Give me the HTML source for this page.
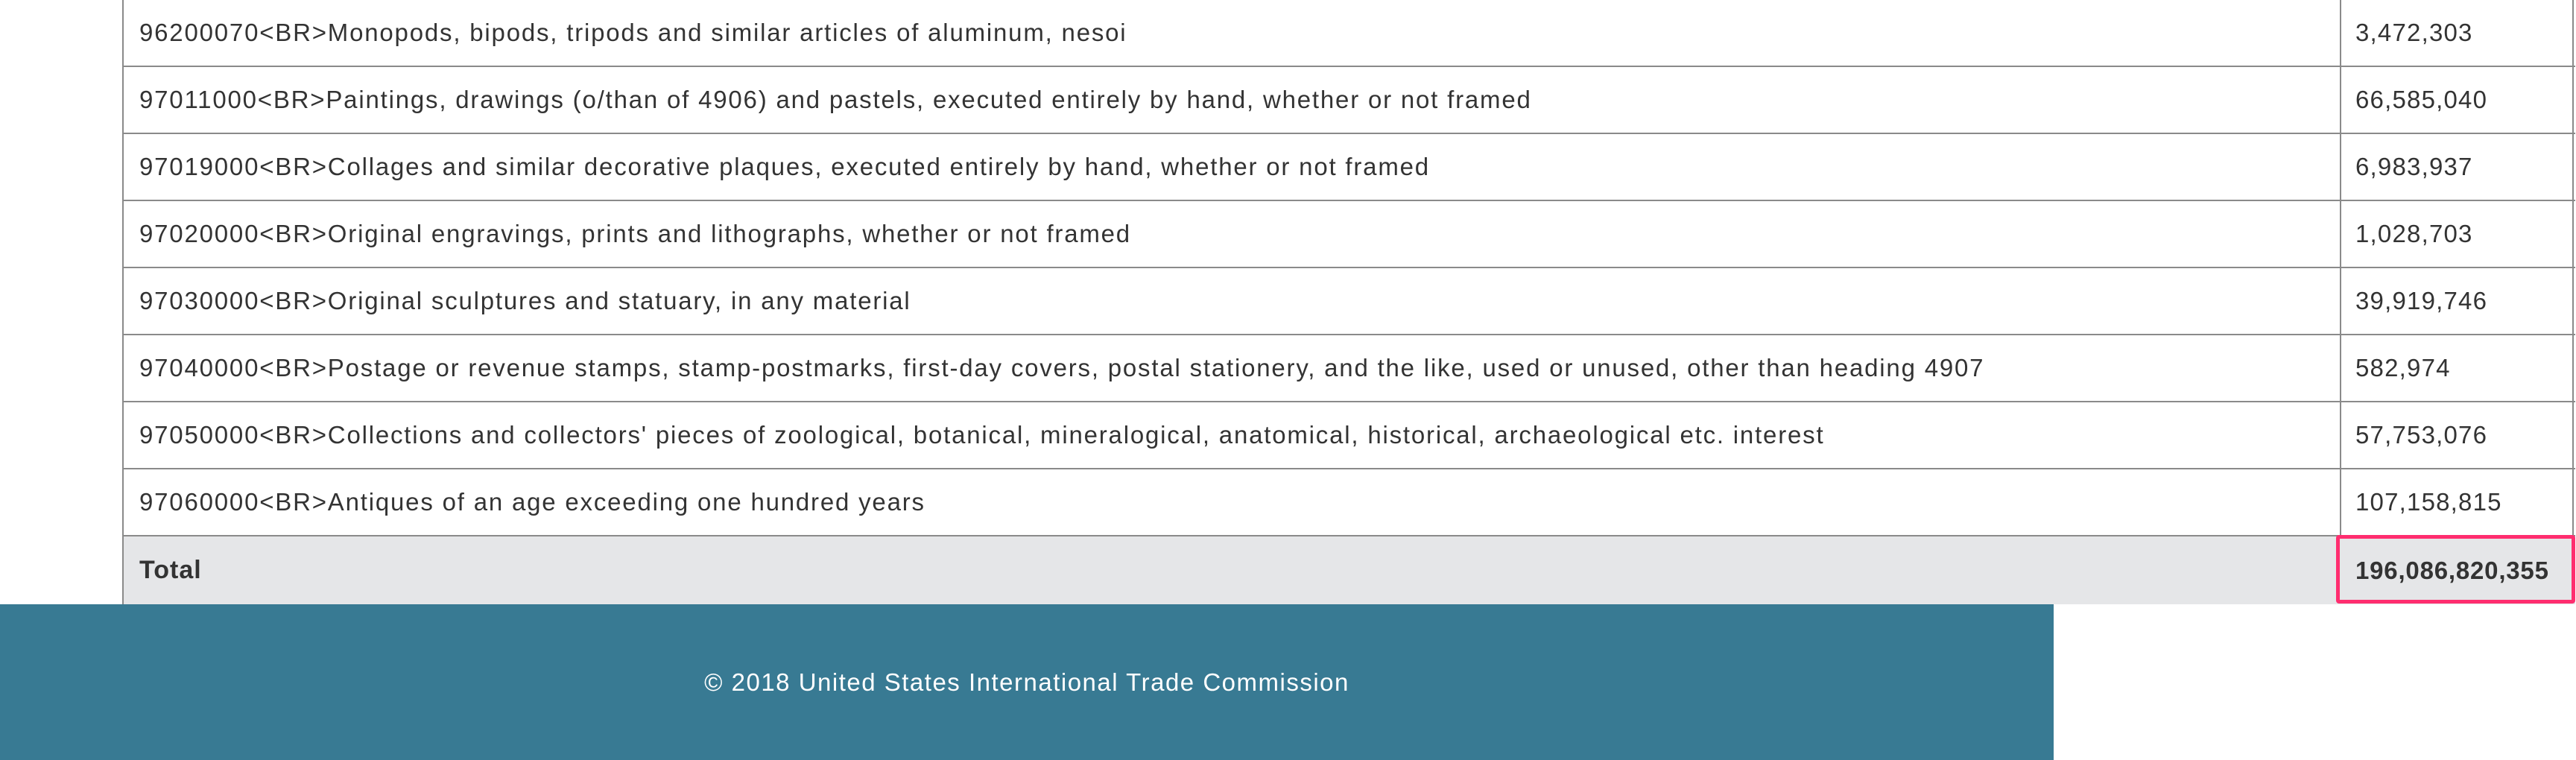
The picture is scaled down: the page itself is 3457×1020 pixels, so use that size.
<!DOCTYPE html>
<html><head><style>
html,body{margin:0;padding:0;width:3457px;height:1020px;overflow:hidden;background:#fff;font-family:"Liberation Sans",sans-serif;color:#333;}
.t{position:absolute;left:164px;top:0;width:3290px;}
.r{position:absolute;left:0;width:3290px;height:90px;border-bottom:2px solid #8a8a8a;box-sizing:border-box;}
.c{position:absolute;top:0;height:100%;display:flex;align-items:center;font-size:33px;letter-spacing:1.8px;white-space:nowrap;}
.c1{left:21px;}
.c2{left:2995px;letter-spacing:1.2px;}
.v{position:absolute;left:2974px;top:0;height:100%;border-left:2px solid #8a8a8a;}
</style></head><body>
<div class="t" style="height:811px;border-left:2px solid #8a8a8a;border-right:2px solid #8a8a8a;box-sizing:border-box;">
<div class="r" style="top:0"><div class="v"></div><div class="c c1">96200070&lt;BR&gt;Monopods, bipods, tripods and similar articles of aluminum, nesoi</div><div class="c c2">3,472,303</div></div>
<div class="r" style="top:90px"><div class="v"></div><div class="c c1">97011000&lt;BR&gt;Paintings, drawings (o/than of 4906) and pastels, executed entirely by hand, whether or not framed</div><div class="c c2">66,585,040</div></div>
<div class="r" style="top:180px"><div class="v"></div><div class="c c1">97019000&lt;BR&gt;Collages and similar decorative plaques, executed entirely by hand, whether or not framed</div><div class="c c2">6,983,937</div></div>
<div class="r" style="top:270px"><div class="v"></div><div class="c c1">97020000&lt;BR&gt;Original engravings, prints and lithographs, whether or not framed</div><div class="c c2">1,028,703</div></div>
<div class="r" style="top:360px"><div class="v"></div><div class="c c1">97030000&lt;BR&gt;Original sculptures and statuary, in any material</div><div class="c c2">39,919,746</div></div>
<div class="r" style="top:450px"><div class="v"></div><div class="c c1">97040000&lt;BR&gt;Postage or revenue stamps, stamp-postmarks, first-day covers, postal stationery, and the like, used or unused, other than heading 4907</div><div class="c c2">582,974</div></div>
<div class="r" style="top:540px"><div class="v"></div><div class="c c1">97050000&lt;BR&gt;Collections and collectors' pieces of zoological, botanical, mineralogical, anatomical, historical, archaeological etc. interest</div><div class="c c2">57,753,076</div></div>
<div class="r" style="top:630px"><div class="v"></div><div class="c c1">97060000&lt;BR&gt;Antiques of an age exceeding one hundred years</div><div class="c c2">107,158,815</div></div>
<div class="r" style="top:720px;height:91px;background:#e5e6e8;border-bottom:none;"><div class="c c1" style="font-weight:bold;letter-spacing:1px;font-size:34px;">Total</div><div class="c c2" style="font-weight:bold;letter-spacing:0.8px;font-size:33px;">196,086,820,355</div></div>
</div>
<div style="position:absolute;left:3135px;top:718px;width:321px;height:92px;border:5px solid #ff2d6f;border-radius:4px;box-sizing:border-box;"></div>
<div style="position:absolute;left:0;top:811px;width:2756px;height:209px;background:#387a93;color:#fff;font-size:33px;letter-spacing:1.5px;display:flex;align-items:center;justify-content:center;">© 2018 United States International Trade Commission</div>
</body></html>
